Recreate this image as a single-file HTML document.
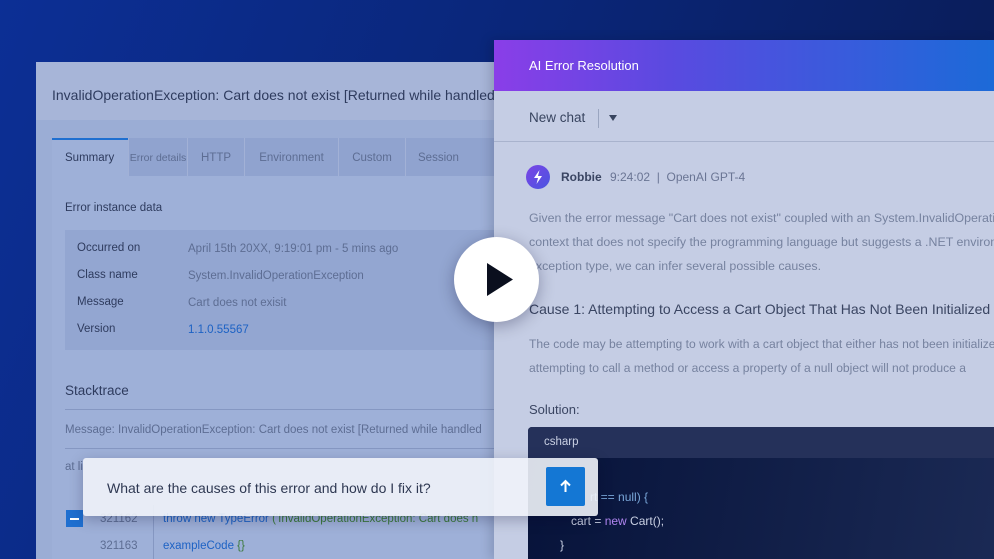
<!DOCTYPE html>
<html><head><style>
*{margin:0;padding:0;box-sizing:border-box}
body{width:994px;height:559px;overflow:hidden;position:relative;font-family:"Liberation Sans",sans-serif;background:linear-gradient(110deg,#0c2f95 0%,#0a2679 45%,#0a1a4f 100%)}
.a{position:absolute;white-space:nowrap}
#left{position:absolute;left:36px;top:62px;width:470px;height:497px;background:#9badd5;overflow:hidden}
#lh{position:absolute;left:0;top:0;width:100%;height:58px;background:#a7b5d8}
#right{position:absolute;left:494px;top:40px;width:500px;height:519px;background:#c5cde4;overflow:hidden;box-shadow:-4px 0 10px rgba(0,0,30,.15)}
#rh{position:absolute;left:0;top:0;width:100%;height:51px;background:linear-gradient(90deg,#8a3ee8 0%,#5a4ae0 35%,#1c6ad8 100%)}
.g{color:#5d6d93}
.d{color:#2e3b5e}
.tab{position:absolute;top:76px;height:38px;background:#90a3cf;border-left:1px solid #a2b1d6;font-size:11.5px;color:#5d6d93;text-align:center;line-height:40px;white-space:nowrap;overflow:hidden}
</style></head><body>
<div id="left">
 <div id="lh"></div>
 <div class="a d" style="left:16px;top:25px;font-size:14px;">InvalidOperationException: Cart does not exist [Returned while handled</div>
 <div class="a" style="left:16px;top:76px;width:460px;height:421px;background:#9eb0d8"></div>
 <div class="tab" style="left:92px;width:59px;font-size:10.5px">Error details</div>
 <div class="tab" style="left:151px;width:57px">HTTP</div>
 <div class="tab" style="left:208px;width:94px">Environment</div>
 <div class="tab" style="left:302px;width:67px">Custom</div>
 <div class="tab" style="left:369px;width:110px;text-align:left;padding-left:12px">Session</div>
 <div class="a" style="left:16px;top:76px;width:76px;height:38px;background:#9eb0d8;border-top:2px solid #1f6fd0"></div>
 <div class="a" style="left:29px;top:90px;font-size:11.5px;color:#2e3b5e">Summary</div>
 <div class="a d" style="left:29px;top:140px;font-size:11.5px">Error instance data</div>
 <div class="a" style="left:29px;top:168px;width:440px;height:120px;background:#93a6d1"></div>
 <div class="a d" style="left:41px;top:180px;font-size:11.5px">Occurred on</div>
 <div class="a d" style="left:41px;top:207px;font-size:11.5px">Class name</div>
 <div class="a d" style="left:41px;top:234px;font-size:11.5px">Message</div>
 <div class="a d" style="left:41px;top:261px;font-size:11.5px">Version</div>
 <div class="a g" style="left:152px;top:181px;font-size:11.5px">April 15th 20XX, 9:19:01 pm - 5 mins ago</div>
 <div class="a g" style="left:152px;top:208px;font-size:11.5px">System.InvalidOperationException</div>
 <div class="a g" style="left:152px;top:235px;font-size:11.5px">Cart does not exisit</div>
 <div class="a" style="left:152px;top:262px;font-size:11.5px;color:#1d62c4">1.1.0.55567</div>
 <div class="a d" style="left:29px;top:321px;font-size:13.5px">Stacktrace</div>
 <div class="a" style="left:29px;top:347px;width:440px;height:1px;background:#8597c2"></div>
 <div class="a g" style="left:29px;top:362px;font-size:11.5px">Message: InvalidOperationException: Cart does not exist [Returned while handled</div>
 <div class="a" style="left:29px;top:386px;width:440px;height:1px;background:#8597c2"></div>
 <div class="a g" style="left:29px;top:399px;font-size:11.5px">at li</div>
 <div class="a" style="left:30px;top:448px;width:17px;height:17px;background:#1f6fd0"><div style="margin:8px 4px;height:2px;background:#fff"></div></div>
 <div class="a g" style="left:64px;top:451px;font-size:11.5px">321162</div>
 <div class="a g" style="left:64px;top:478px;font-size:11.5px">321163</div>
 <div class="a" style="left:117px;top:443px;width:1px;height:54px;background:#8597c2"></div>
 <div class="a" style="left:127px;top:451px;font-size:11.5px;color:#1d62c4">throw new TypeError <span style="color:#3c7a3c">('InvalidOperationException: Cart does n</span></div>
 <div class="a" style="left:127px;top:478px;font-size:11.5px;color:#1d62c4">exampleCode <span style="color:#3c7a3c">{}</span></div>
</div>
<div id="right">
 <div id="rh"></div>
 <div class="a" style="left:35px;top:18px;font-size:13px;color:#fff">AI Error Resolution</div>
 <div class="a" style="left:35px;top:70px;font-size:13.5px;color:#38445f">New chat</div>
 <div class="a" style="left:104px;top:69px;width:1px;height:19px;background:#9aa5c0"></div>
 <div class="a" style="left:115px;top:75px;width:0;height:0;border-left:4px solid transparent;border-right:4px solid transparent;border-top:6px solid #38445f"></div>
 <div class="a" style="left:0;top:101px;width:500px;height:1px;background:#a9b3cd"></div>
 <div class="a" style="left:32px;top:125px;width:24px;height:24px;border-radius:50%;background:linear-gradient(135deg,#7a44e6,#4a55e0)"><svg width="24" height="24" viewBox="0 0 24 24"><path d="M13.5 5 L8 13 H12 L10.5 19 L16 11 H12 Z" fill="#fff"/></svg></div>
 <div class="a" style="left:67px;top:130px;font-size:12px;color:#3a4562;font-weight:bold">Robbie</div>
 <div class="a" style="left:116px;top:130px;font-size:12px;color:#6a7594">9:24:02 &nbsp;| &nbsp;OpenAI GPT-4</div>
 <div class="a" style="left:35px;top:166px;font-size:12.4px;color:#76829f;line-height:24px">Given the error message "Cart does not exist" coupled with an System.InvalidOperationException<br>context that does not specify the programming language but suggests a .NET environment<br>exception type, we can infer several possible causes.</div>
 <div class="a" style="left:35px;top:261px;font-size:14px;color:#3a4562">Cause 1: Attempting to Access a Cart Object That Has Not Been Initialized</div>
 <div class="a" style="left:35px;top:292px;font-size:12.1px;color:#76829f;line-height:24px">The code may be attempting to work with a cart object that either has not been initialized;<br>attempting to call a method or access a property of a null object will not produce a</div>
 <div class="a" style="left:35px;top:362px;font-size:13px;color:#3a4562">Solution:</div>
 <div class="a" style="left:34px;top:387px;width:480px;height:140px;background:linear-gradient(100deg,#07133a,#1b2a55);border-radius:4px 0 0 0"></div>
 <div class="a" style="left:34px;top:387px;width:480px;height:31px;background:#25315a;border-radius:4px 0 0 0"></div>
 <div class="a" style="left:50px;top:396px;font-size:11.5px;color:#c9d0e3">csharp</div>
 <div class="a" style="left:96px;top:450px;font-size:12px;color:#7aa7d9">rt == null) {</div>
 <div class="a" style="left:77px;top:474px;font-size:12px;color:#c9d0e3">cart = <span style="color:#b085f0">new</span> Cart();</div>
 <div class="a" style="left:66px;top:498px;font-size:12px;color:#c9d0e3">}</div>
</div>
<div class="a" style="left:83px;top:458px;width:515px;height:58px;background:rgba(240,243,250,.9);border-radius:3px;box-shadow:0 4px 14px rgba(0,0,40,.25)"></div>
<div class="a" style="left:107px;top:480px;font-size:14px;color:#2e3852">What are the causes of this error and how do I fix it?</div>
<div class="a" style="left:546px;top:467px;width:39px;height:39px;background:#1477d4;border-radius:2px"><svg width="39" height="39" viewBox="0 0 39 39"><path d="M19.5 25 V14 M15 18.5 L19.5 14 L24 18.5" stroke="#fff" stroke-width="2" fill="none"/></svg></div>
<div class="a" style="left:454px;top:237px;width:85px;height:85px;border-radius:50%;background:#fff;box-shadow:0 4px 16px rgba(0,0,40,.3)"><svg width="85" height="85" viewBox="0 0 85 85"><path d="M33 26 L59 42.5 L33 59 Z" fill="#0a0f1e"/></svg></div>
</body></html>
